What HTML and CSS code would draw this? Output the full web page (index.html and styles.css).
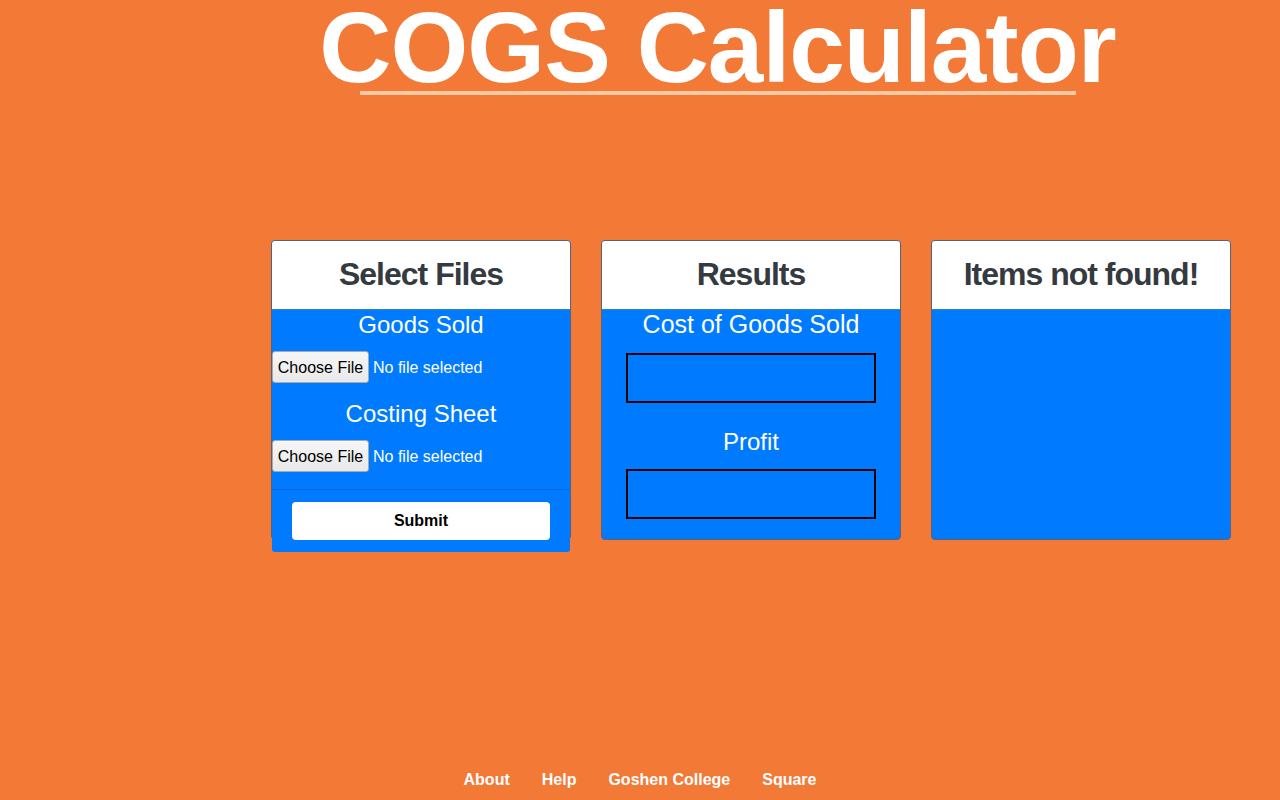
FILE: index.html
```html
<!DOCTYPE html>
<html lang="en">
<head>
<meta charset="utf-8">
<title>COGS Calculator</title>
<link rel="stylesheet" href="styles.css">
</head>
<body>
<header class="masthead">
  <h1 class="title">COGS Calculator</h1>
  <div class="title-rule"></div>
</header>

<main class="cards">
  <section class="card">
    <div class="card-header"><h2>Select Files</h2></div>
    <div class="card-body">
      <h3 class="field-label">Goods Sold</h3>
      <div class="file-input">
        <span class="file-btn">Choose File</span>
        <span class="file-name">No file selected</span>
      </div>
      <h3 class="field-label second">Costing Sheet</h3>
      <div class="file-input">
        <span class="file-btn">Choose File</span>
        <span class="file-name">No file selected</span>
      </div>
    </div>
    <div class="card-footer">
      <button class="submit" type="button">Submit</button>
    </div>
  </section>

  <section class="card">
    <div class="card-header"><h2>Results</h2></div>
    <div class="card-body results">
      <h3 class="field-label">Cost of Goods Sold</h3>
      <div class="result-box"></div>
      <h3 class="field-label profit">Profit</h3>
      <div class="result-box last"></div>
    </div>
  </section>

  <section class="card">
    <div class="card-header"><h2>Items not found!</h2></div>
    <div class="card-body"></div>
  </section>
</main>

<footer class="site-footer">
  <a href="#">About</a>
  <a href="#">Help</a>
  <a href="#">Goshen College</a>
  <a href="#">Square</a>
</footer>
</body>
</html>
```

FILE: styles.css
```css
* { box-sizing: border-box; }

html, body {
  margin: 0;
  padding: 0;
}

body {
  min-height: 100vh;
  background: #f37937;
  font-family: "Liberation Sans", Arial, Helvetica, sans-serif;
  color: #fff;
  display: flex;
  flex-direction: column;
}

.masthead {
  display: flex;
  flex-direction: column;
  align-items: center;
  padding-left: 155px;
}

.title {
  margin: 0;
  font-size: 100px;
  line-height: 95px;
  font-weight: 700;
  letter-spacing: -1px;
  color: #fff;
  white-space: nowrap;
}

.title-rule {
  width: 716px;
  height: 4px;
  margin-top: -4px;
  background: #fbc9a4;
}

.cards {
  display: flex;
  gap: 30px;
  margin-top: 145px;
  margin-left: 271px;
}

.card {
  width: 300px;
  height: 300px;
  border: 1px solid #52637f;
  border-radius: 4px;
  background: #007bff;
}

.card-header {
  height: 69px;
  background: #fff;
  border-bottom: 1px solid #2a8c9c;
  border-radius: 3px 3px 0 0;
  display: flex;
  align-items: center;
  justify-content: center;
}

.card-header h2 {
  margin: 0;
  font-size: 32px;
  line-height: 38px;
  font-weight: 700;
  letter-spacing: -1px;
  color: #343a40;
  padding-bottom: 3px;
}

.card-body {
  display: flex;
  flex-direction: column;
}

.field-label {
  margin: 0 0 12px;
  font-size: 24px;
  line-height: 29px;
  font-weight: 400;
  text-align: center;
  color: #fff;
}

.field-label.second {
  margin-top: 16px;
  margin-bottom: 12px;
}

.file-input {
  display: flex;
  align-items: center;
  gap: 4px;
  height: 32px;
}

.file-btn {
  height: 32px;
  width: 97px;
  display: flex;
  align-items: center;
  justify-content: center;
  padding-top: 1px;
  background: linear-gradient(#f6f6f6, #e9e9e9);
  border: 1px solid #a9a9a9;
  border-radius: 3px;
  color: #000;
  font-size: 16px;
}

.file-name {
  font-size: 16px;
  color: #fff;
  padding-top: 1px;
}

.card-footer {
  margin-top: 17px;
  padding: 12px 20px;
  background: #007bff;
  border-top: 1px solid #0068d9;
  border-radius: 0 0 3px 3px;
}

.submit {
  display: block;
  width: 100%;
  height: 38px;
  border: 0;
  border-radius: 4px;
  background: #fff;
  color: #000;
  font-family: inherit;
  font-size: 16px;
  font-weight: 700;
}

.results {
  align-items: center;
}

.results .field-label {
  margin-bottom: 14px;
  font-size: 25px;
}

.results .field-label.profit {
  margin-top: 24px;
  margin-bottom: 13px;
  font-size: 24px;
}

.result-box {
  width: 250px;
  height: 50px;
  border: 2px solid #000;
}

.site-footer {
  margin-top: auto;
  display: flex;
  justify-content: center;
  gap: 32px;
  padding-bottom: 11px;
}

.site-footer a {
  color: #fff;
  text-decoration: none;
  font-weight: 700;
  font-size: 16px;
  line-height: 18px;
}
```
